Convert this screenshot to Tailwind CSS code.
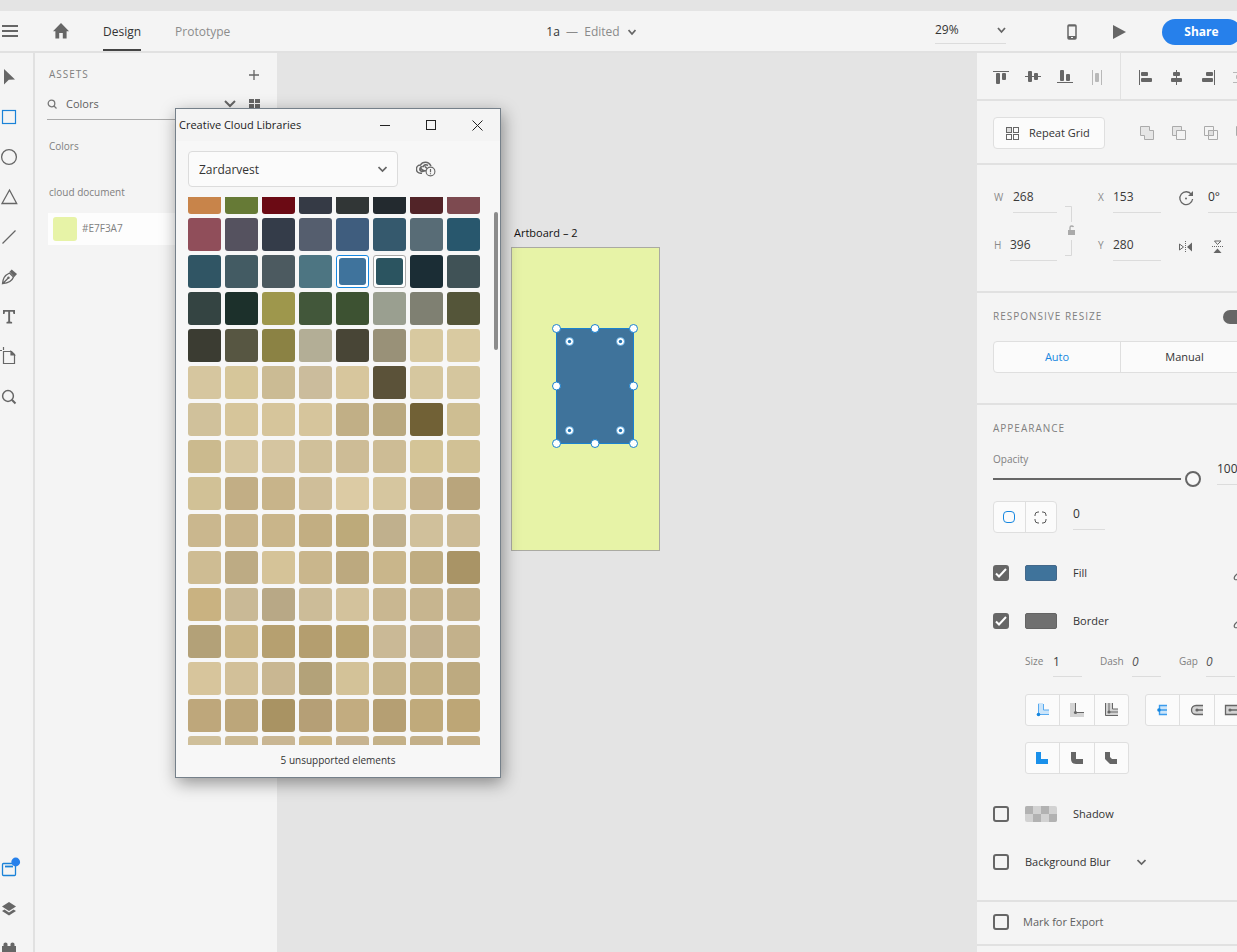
<!DOCTYPE html>
<html lang="en">
<head>
<meta charset="utf-8">
<meta name="viewport" content="width=device-width, initial-scale=1">
<title>1a</title>
<script src="https://cdn.jsdelivr.net/npm/@tailwindcss/browser@4"></script>
</head>
<body class="flex h-screen flex-col overflow-hidden bg-[#e4e4e4] font-['Open_Sans','Noto_Sans',sans-serif] text-xs text-[#333]">

<header class="mt-[11px] flex h-[42px] shrink-0 items-stretch border-b-2 border-[#e1e1e1] bg-[#f4f4f4]">
  <div class="flex w-[247px] shrink-0 items-stretch">
    <button class="w-[19px] shrink-0" aria-label="Menu">
      <svg class="ml-[2px]" width="16" height="14" fill="#666"><path d="M0 1h16v2H0zM0 6h16v2H0zM0 11h16v2H0z"/></svg>
    </button>
    <button class="ml-[34px] w-4 shrink-0" aria-label="Home">
      <svg width="16" height="16" fill="#666"><path d="M8 0l8 8.200h-2.400V15.500H9.800V10H6.200v5.500H2.400V8.200H0z"/></svg>
    </button>
    <nav class="ml-[34px] flex items-stretch gap-[34px] leading-4">
      <a href="#design" class="border-b-2 border-[#444] pt-[13px] text-[#333]">Design</a>
      <a href="#prototype" class="border-b-2 border-transparent pt-[13px] text-[#8c8c8c]">Prototype</a>
    </nav>
  </div>
  <button class="mx-auto flex items-center gap-2 pt-[2px] text-[#8a8a8a]">
    <span><span class="text-[#333]">1a</span>&nbsp; —&nbsp; Edited</span>
    <svg width="8" height="7" fill="none" stroke="#666" stroke-width="1.800"><path d="M.5 1l3.500 4 3.500-4"/></svg>
  </button>
  <div class="flex w-[302px] shrink-0 items-center pt-px">
    <button class="-mt-1 flex h-7 w-[71px] shrink-0 items-center justify-between border-b border-[#dcdcdc] pt-[2px]" aria-label="Zoom level">29%
      <svg width="9" height="7" fill="none" stroke="#666" stroke-width="1.800"><path d="M1 1l3.500 4 3.500-4"/></svg>
    </button>
    <button class="ml-[61px] shrink-0" aria-label="Device preview">
      <svg width="10" height="16"><rect x="1" y="1" width="8" height="14" rx="1" fill="none" stroke="#666" stroke-width="1.500"/><path d="M1 12h8v3H1zM1 1h8v1.500H1z" fill="#666"/><path d="M4 13h2v1H4z" fill="#f4f4f4"/></svg>
    </button>
    <button class="ml-9 shrink-0" aria-label="Play"><svg width="13" height="14" fill="#666"><path d="M0 0l13 7-13 7z"/></svg></button>
    <button class="ml-9 h-[26px] w-[79px] shrink-0 rounded-full bg-[#2680eb] font-bold text-white">Share</button>
  </div>
</header>

<div class="flex min-h-0 flex-1">
  <!-- tool bar -->
  <nav class="flex w-[35px] shrink-0 flex-col justify-between border-r-2 border-[#e1e1e1] bg-[#f4f4f4] pt-1" aria-label="Tools">
    <div class="flex w-[19px] flex-col [&>button]:flex [&>button]:h-10 [&>button]:items-center">
      <button aria-label="Select"><svg width="19" height="20" fill="#666"><path d="M4 2l11 10.500-6.200.3L4 17.500z"/></svg></button>
      <button aria-label="Rectangle"><svg width="19" height="20" fill="none" stroke="#1a82d8" stroke-width="1.200"><rect x="2.500" y="3.500" width="13" height="13"/></svg></button>
      <button aria-label="Ellipse"><svg width="19" height="20" fill="none" stroke="#666" stroke-width="1.300"><circle cx="9" cy="10" r="7.400"/></svg></button>
      <button aria-label="Polygon"><svg width="19" height="20" fill="none" stroke="#666" stroke-width="1.300"><path d="M9.500 3L16.700 16.500H2z"/></svg></button>
      <button aria-label="Line"><svg width="19" height="20" stroke="#666" stroke-width="1.300"><path d="M2.500 16.500l13-13"/></svg></button>
      <button aria-label="Pen"><svg width="19" height="20"><path d="M2.500 16.700C3 12 4 8.500 9.500 6l4 4C12 14.500 8 16 2.500 16.700zM2.500 16.700l6-6" fill="none" stroke="#666" stroke-width="1.300"/><circle cx="8.500" cy="10.800" r="1.200" fill="#666"/><path d="M9.500 4.800l2.200-2.300 5.300 4.500-2.700 3z" fill="#666"/></svg></button>
      <button aria-label="Text"><svg width="19" height="20" fill="#666"><path d="M3 3h12v4h-1.500l-.6-2.200h-2.800v9.700l2 .6V16.500H6.500v-1.400l1.700-.6V4.800H5L4.500 7H3z"/></svg></button>
      <button aria-label="Artboard"><svg width="19" height="20" fill="none" stroke="#666" stroke-width="1.200"><path d="M3.500 0v3M0 3.500h2M3.500 4.500v12h11v-9l-3-3z"/><path d="M11 4.500l3.500 3.500H11z" fill="#666"/></svg></button>
      <button aria-label="Zoom"><svg width="19" height="20" fill="none" stroke="#666" stroke-width="1.500"><circle cx="8" cy="9" r="5.400"/><path d="M11.800 12.800l3.700 3.700" stroke-width="2"/></svg></button>
    </div>
    <div class="-mb-[17px] flex w-[19px] flex-col [&>button]:flex [&>button]:h-10 [&>button]:items-center">
      <button aria-label="Assets"><svg class="overflow-visible" width="19" height="20"><rect x="2.500" y="4.500" width="13" height="12" rx="1" fill="none" stroke="#1a82d8" stroke-width="1.300"/><path d="M5 7.500h8" stroke="#1a82d8" stroke-width="1.800"/><circle cx="15.700" cy="3" r="4.400" fill="#2680eb"/></svg></button>
      <button aria-label="Layers"><svg width="19" height="20" fill="#666"><path d="M9 3l7 4.500L9 12 2 7.500z"/><path d="M4.500 10.500L2 12l7 4.500 7-4.500-2.500-1.500L9 13.500z"/></svg></button>
      <button aria-label="Plugins"><svg width="19" height="20" fill="#666"><path d="M2 7h1.500V5q0-1.500 2-1.500t2 1.500v2h3V5q0-1.500 2-1.500t2 1.500v2H16v12H2z"/></svg></button>
    </div>
  </nav>

  <!-- assets panel -->
  <aside class="w-[242px] shrink-0 bg-[#f4f4f4] pl-3 text-[10px] text-[#808080]">
    <div class="mr-[18px] ml-[2px] mt-3 flex h-5 items-center justify-between">
      <h2 class="tracking-[1px]">ASSETS</h2>
      <button aria-label="Add"><svg width="10" height="10" stroke="#666" stroke-width="1.300"><path d="M5 0v10M0 5h10"/></svg></button>
    </div>
    <div class="mr-4 mt-1 flex h-[31px] items-center border-b border-[#aaa]">
      <svg width="12" height="12" fill="none" stroke="#777" stroke-width="1.300"><circle cx="4.500" cy="5.500" r="3.300"/><path d="M7 8l2.500 2.500"/></svg>
      <input class="ml-[7px] min-w-0 flex-1 bg-transparent text-[11px] text-[#606060] outline-none" aria-label="Search assets" value="Colors">
      <button aria-label="Filter"><svg width="12" height="8" fill="none" stroke="#666" stroke-width="2"><path d="M1 1l5 5 5-5"/></svg></button>
      <button class="ml-[13px] mr-px" aria-label="Grid view"><svg width="11" height="10" fill="#666"><path d="M0 0h5v4H0zM6 0h5v4H6zM0 5h5v4H0zM6 5h5v4H6z"/></svg></button>
    </div>
    <h3 class="ml-[2px] mt-[18px] h-4 leading-4">Colors</h3>
    <h3 class="ml-[2px] mt-[30px] h-4 leading-4">cloud document</h3>
    <button class="ml-px mt-[13px] flex h-8 w-[calc(100%-1px)] items-center gap-[5px] bg-[#fdfdfd] pl-[5px]">
      <span class="size-6 rounded-[3px] bg-[#e7f3a7]"></span>#E7F3A7
    </button>
  </aside>

  <!-- canvas -->
  <main class="relative min-w-0 flex-1 bg-[#e4e4e4]">
    <div class="absolute left-[234px] top-[171px]">
      <p class="ml-[3px] h-[23px] text-[11px] leading-[18px] text-[#111]">Artboard – 2</p>
      <svg class="overflow-visible" width="149" height="304">
        <rect x=".5" y=".5" width="148" height="303" fill="#e7f3a7" stroke="#aaaaa2"/>
        <rect x="45.500" y="81.500" width="77" height="115" fill="#3f739b" stroke="#1a82d0"/>
        <g fill="#fff" stroke="#1a82d0">
          <circle cx="45.500" cy="81.500" r="4"/><circle cx="84" cy="81.500" r="4"/><circle cx="122.500" cy="81.500" r="4"/>
          <circle cx="45.500" cy="139" r="4"/><circle cx="122.500" cy="139" r="4"/>
          <circle cx="45.500" cy="196.500" r="4"/><circle cx="84" cy="196.500" r="4"/><circle cx="122.500" cy="196.500" r="4"/>
        </g>
        <g fill="#fff" stroke="#4ba0dc" stroke-width=".8">
          <circle cx="58.500" cy="94.500" r="4"/><circle cx="109.500" cy="94.500" r="4"/><circle cx="58.500" cy="183.500" r="4"/><circle cx="109.500" cy="183.500" r="4"/>
        </g>
        <g fill="#2676b4">
          <circle cx="58.500" cy="94.500" r="1.700"/><circle cx="109.500" cy="94.500" r="1.700"/><circle cx="58.500" cy="183.500" r="1.700"/><circle cx="109.500" cy="183.500" r="1.700"/>
        </g>
      </svg>
    </div>
  </main>

  <!-- property inspector -->
  <aside class="w-[260px] shrink-0 overflow-hidden bg-[#f4f4f4] [&_input]:outline-none">
    <section class="flex h-12 w-[288px] border-b-2 border-[#e1e1e1]">
      <div class="flex w-36 items-center gap-4 border-r border-[#e1e1e1] pl-4 pt-1">
        <button aria-label="Align top"><svg width="16" height="16" fill="#666"><path d="M0 1h16v1H0z"/><rect x="3" y="3" width="4" height="11" rx="1"/><rect x="9" y="3" width="4" height="7" rx="1"/></svg></button>
        <button aria-label="Align middle"><svg width="16" height="16" fill="#666"><path d="M0 6h16v1H0z"/><rect x="3" y="1" width="4" height="11" rx="1"/><rect x="9" y="3" width="4" height="7" rx="1"/></svg></button>
        <button aria-label="Align bottom"><svg width="16" height="16" fill="#666"><path d="M0 12h16v1H0z"/><rect x="3" y="0" width="4" height="11" rx="1"/><rect x="9" y="4" width="4" height="7" rx="1"/></svg></button>
        <button aria-label="Distribute horizontally"><svg width="16" height="16" fill="#b8b8b8"><path d="M3 0h1v15H3zM12 0h1v15h-1z"/><rect x="6" y="3" width="4" height="9" rx="1"/></svg></button>
      </div>
      <div class="flex items-center gap-4 pl-4 pt-1">
        <button aria-label="Align left"><svg width="16" height="16" fill="#666"><path d="M2 0h1v15H2z"/><rect x="4" y="2" width="7" height="4" rx="1"/><rect x="4" y="8" width="11" height="4" rx="1"/></svg></button>
        <button aria-label="Align centre"><svg width="16" height="16" fill="#666"><path d="M7 0h1v15H7z"/><rect x="4" y="2" width="7" height="4" rx="1"/><rect x="2" y="8" width="11" height="4" rx="1"/></svg></button>
        <button aria-label="Align right"><svg width="16" height="16" fill="#666"><path d="M13 0h1v15h-1z"/><rect x="5" y="2" width="7" height="4" rx="1"/><rect x="1" y="8" width="11" height="4" rx="1"/></svg></button>
        <button aria-label="Distribute vertically"><svg width="16" height="16" fill="#b8b8b8"><path d="M0 2h16v1H0zM0 12h16v1H0z"/><rect x="3" y="5" width="10" height="4" rx="1"/></svg></button>
      </div>
    </section>

    <section class="flex h-16 w-[288px] items-center border-b-2 border-[#e1e1e1] pl-4 pt-[2px]">
      <button class="flex h-8 w-28 items-center gap-[9px] rounded-[4px] border border-[#dfdfdf] bg-[#fbfbfb] pl-3 pt-px text-[11px]">
        <svg width="14" height="14" fill="none" stroke="#666"><rect x=".5" y=".5" width="5" height="5" fill="#ddd"/><rect x="7.500" y=".5" width="5" height="5"/><rect x=".5" y="7.500" width="5" height="5"/><rect x="7.500" y="7.500" width="5" height="5"/></svg>
        Repeat Grid
      </button>
      <div class="ml-[34px] flex gap-4">
        <button aria-label="Add"><svg width="16" height="16" fill="#e6e6e6" stroke="#aaa"><path d="M1.500 1.500h9v4h4v9h-9v-4h-4z"/></svg></button>
        <button aria-label="Subtract"><svg width="16" height="16" stroke="#aaa"><path d="M1.500 1.500h9v9h-9z" fill="#e6e6e6"/><path d="M5.500 5.500h9v9h-9z" fill="#f4f4f4"/></svg></button>
        <button aria-label="Intersect"><svg width="16" height="16" fill="none" stroke="#aaa"><path d="M1.500 1.500h9v9h-9zM5.500 5.500h9v9h-9z"/><path d="M5.500 5.500h5v5h-5z" fill="#e0e0e0"/></svg></button>
        <button aria-label="Exclude overlap"><svg width="16" height="16" fill="#ddd" fill-rule="evenodd" stroke="#aaa"><path d="M1.500 1.500h9v9h-9zM5.500 5.500h9v9h-9z"/></svg></button>
      </div>
    </section>

    <section class="flex h-32 w-[288px] border-b-2 border-[#e1e1e1] pl-4 pt-[18px]">
      <div class="flex w-16 flex-col gap-[18px] text-[10px] text-[#8a8a8a]">
        <label class="flex items-center gap-[9px]"><span class="w-[11px] pl-px">W</span><input class="h-[30px] min-w-0 flex-1 border-b border-[#dcdcdc] pb-[3px] text-xs text-[#3a3a3a]" value="268"></label>
        <label class="flex items-center gap-[7px]"><span class="w-[10px] pl-px">H</span><input class="h-[30px] min-w-0 flex-1 border-b border-[#dcdcdc] pb-[3px] text-xs text-[#3a3a3a]" value="396"></label>
      </div>
      <button class="ml-2 mt-[23px] h-[50px]" aria-label="Lock aspect">
        <svg width="12" height="50" fill="none" stroke="#d8d8d8"><path d="M0 .5h6.500V16M6.500 34v15.500H0"/><rect x="3" y="24" width="7" height="5" fill="#aaa" stroke="none"/><path d="M5 24v-2.500q0-1.500 1.500-1.500T8.500 21" stroke="#aaa" stroke-width="1.300"/></svg>
      </button>
      <div class="ml-[21px] flex w-[63px] flex-col gap-[18px] text-[10px] text-[#8a8a8a]">
        <label class="flex items-center gap-[5px]"><span class="w-[10px]">X</span><input class="h-[30px] min-w-0 flex-1 border-b border-[#dcdcdc] pb-[3px] text-xs text-[#3a3a3a]" value="153"></label>
        <label class="flex items-center gap-[5px]"><span class="w-[10px]">Y</span><input class="h-[30px] min-w-0 flex-1 border-b border-[#dcdcdc] pb-[3px] text-xs text-[#3a3a3a]" value="280"></label>
      </div>
      <div class="ml-[17px] flex flex-col gap-[18px]">
        <label class="flex h-[30px] items-center gap-[13px]">
          <svg width="17" height="17" fill="none" stroke="#666" stroke-width="1.300"><path d="M13.500 4.500A6.400 6.400 0 1 0 14.600 9"/><path d="M15 1v5h-5z" fill="#666" stroke="none"/><circle cx="8" cy="8.500" r="1" fill="#666" stroke="none"/></svg>
          <input class="h-[30px] w-12 border-b border-[#dcdcdc] pb-[3px]" aria-label="Rotation" value="0°">
        </label>
        <div class="flex h-[30px] items-center gap-[18px] pt-px">
          <button aria-label="Flip horizontally"><svg width="15" height="14"><path d="M1.500 4l4 3-4 3z" fill="none" stroke="#666"/><path d="M14 2.500v9L9 7z" fill="#666"/><path d="M7.500 1v12" stroke="#666" stroke-dasharray="1 1"/></svg></button>
          <button aria-label="Flip vertically"><svg width="13" height="15"><path d="M3.500 2l3 3.500L10 2z" fill="none" stroke="#666"/><path d="M2.500 14h8l-4-4.500z" fill="#666"/><path d="M1 7.500h12" stroke="#666" stroke-dasharray="1 1"/></svg></button>
        </div>
      </div>
    </section>

    <section class="h-28 w-[288px] border-b-2 border-[#e1e1e1] pl-4 pt-4">
      <div class="flex h-4 items-center justify-between">
        <h2 class="text-[10px] tracking-[1px] text-[#808080]">RESPONSIVE RESIZE</h2>
        <button role="switch" aria-checked="true" aria-label="Responsive resize" class="mr-4 flex h-[14px] w-[26px] justify-end rounded-full bg-[#666] p-[2px]"><span class="size-[10px] rounded-full bg-white"></span></button>
      </div>
      <div class="mt-4 flex h-8 w-64 rounded-[4px] border border-[#dfdfdf] bg-[#fbfbfb] text-[11px]">
        <button class="w-[127px] border-r border-[#dfdfdf] pt-px text-[#1687e0]">Auto</button>
        <button class="flex-1 pt-px">Manual</button>
      </div>
    </section>

    <section class="w-[288px] border-b-2 border-[#e1e1e1] pb-[30px] pl-4 pt-[15px]">
      <h2 class="h-4 text-[10px] leading-4 tracking-[1px] text-[#808080]">APPEARANCE</h2>
      <div class="mt-[15px] flex h-9">
        <label class="flex w-[208px] flex-col gap-1 text-[10px] leading-4 text-[#808080]">Opacity
          <input type="range" min="0" max="100" value="100" class="h-4 w-full appearance-none bg-transparent [&::-webkit-slider-runnable-track]:h-[2px] [&::-webkit-slider-runnable-track]:bg-[#666] [&::-webkit-slider-thumb]:-mt-[7px] [&::-webkit-slider-thumb]:size-4 [&::-webkit-slider-thumb]:appearance-none [&::-webkit-slider-thumb]:rounded-full [&::-webkit-slider-thumb]:border-2 [&::-webkit-slider-thumb]:border-[#666] [&::-webkit-slider-thumb]:bg-[#f8f8f8] [&::-webkit-slider-thumb]:shadow-[0_0_0_4px_#f4f4f4]">
        </label>
        <input class="ml-4 mt-1 h-[30px] w-10 border-b border-[#dcdcdc] pb-[2px]" aria-label="Opacity value" value="100%">
      </div>
      <div class="mt-[14px] flex h-8 gap-4">
        <div class="flex w-16 rounded-[4px] border border-[#dfdfdf] bg-[#fbfbfb]">
          <button class="grid flex-1 place-items-center border-r border-[#dfdfdf]" aria-label="Same radius for all corners"><svg width="12" height="12" fill="none" stroke="#1687e0"><rect x=".5" y=".5" width="11" height="11" rx="3.500"/></svg></button>
          <button class="grid flex-1 place-items-center" aria-label="Different radius for each corner"><svg width="13" height="13" fill="none" stroke="#555"><path d="M1 5V4q0-3 3-3h1M8 1h1q3 0 3 3v1M12 8v1q0 3-3 3H8M5 12H4q-3 0-3-3V8"/></svg></button>
        </div>
        <input class="-mt-px h-[30px] w-8 border-b border-[#dcdcdc] pb-[2px]" aria-label="Corner radius" value="0">
      </div>

      <div class="mt-8 flex h-4 items-center">
        <span class="grid size-4"><input id="fill" type="checkbox" checked class="peer size-4 appearance-none rounded-[3px] border-2 border-[#666] checked:bg-[#666] [grid-area:1/1]"><svg class="pointer-events-none hidden peer-checked:block [grid-area:1/1]" width="16" height="16" fill="none" stroke="#fff" stroke-width="2"><path d="M3 8.500l3 3 7-7.500"/></svg></span>
        <button class="ml-4 h-4 w-8 rounded-[2px] border border-[#44688a] bg-[#3f739b]" aria-label="Fill colour"></button>
        <label for="fill" class="ml-4 w-[160px] pt-px text-[11px]">Fill</label>
        <button aria-label="Pick fill colour"><svg width="16" height="16" fill="none" stroke="#666" stroke-width="1.200"><path d="M2 14.500c-1.500-1-.5-3 .5-4l6-6 3 3-6 6c-1 1-2.500 1.500-3.500 1zM7 3.500l5.500 5.500M10 5l3-3"/></svg></button>
      </div>
      <div class="mt-8 flex h-4 items-center">
        <span class="grid size-4"><input id="border" type="checkbox" checked class="peer size-4 appearance-none rounded-[3px] border-2 border-[#666] checked:bg-[#666] [grid-area:1/1]"><svg class="pointer-events-none hidden peer-checked:block [grid-area:1/1]" width="16" height="16" fill="none" stroke="#fff" stroke-width="2"><path d="M3 8.500l3 3 7-7.500"/></svg></span>
        <button class="ml-4 h-4 w-8 rounded-[2px] border border-[#646464] bg-[#707070]" aria-label="Border colour"></button>
        <label for="border" class="ml-4 w-[160px] pt-px text-[11px]">Border</label>
        <button aria-label="Pick border colour"><svg width="16" height="16" fill="none" stroke="#666" stroke-width="1.200"><path d="M2 14.500c-1.500-1-.5-3 .5-4l6-6 3 3-6 6c-1 1-2.500 1.500-3.500 1zM7 3.500l5.500 5.500M10 5l3-3"/></svg></button>
      </div>

      <div class="ml-8 mt-[18px] flex text-[10px] text-[#808080]">
        <label class="flex items-center"><span class="w-7">Size</span><input class="h-[30px] w-[29px] border-b border-[#dcdcdc] pb-px text-xs text-[#3a3a3a]" value="1"></label>
        <label class="ml-[18px] flex items-center"><span class="w-8">Dash</span><input class="h-[30px] w-[29px] border-b border-[#dcdcdc] text-xs italic text-[#555]" value="0"></label>
        <label class="ml-[18px] flex items-center"><span class="w-[27px]">Gap</span><input class="h-[30px] w-[29px] border-b border-[#dcdcdc] text-xs italic text-[#555]" value="0"></label>
      </div>

      <div class="ml-8 mt-[17px] flex gap-4">
        <div class="flex h-8 w-[104px] divide-x divide-[#dfdfdf] rounded-[3px] border border-[#dfdfdf] bg-[#fbfbfb] [&>button]:grid [&>button]:flex-1 [&>button]:place-items-center">
          <button aria-label="Inner stroke"><svg width="14" height="14"><path d="M2 0h5v7h6v5H2z" fill="#cbe5fa"/><path d="M2.500 1v10.500H13M7.500 1v6H13" fill="none" stroke="#58aaf0"/><circle cx="2.500" cy="11.500" r="1.800" fill="#1687e0"/></svg></button>
          <button aria-label="Outer stroke"><svg width="16" height="16"><path d="M1 1h5v9h9v5H1z" fill="#d4d4d4"/><path d="M6.500 1v9.500H15" fill="none" stroke="#666"/><circle cx="6.500" cy="10.500" r="1.600" fill="#666"/></svg></button>
          <button aria-label="Centre stroke"><svg width="16" height="16"><path d="M2 1h7v6h6v7H2z" fill="#d4d4d4"/><path d="M2.500 1v12.500H15M9.500 1v6H15M6 1v9h9" fill="none" stroke="#666"/><circle cx="6" cy="10" r="1.600" fill="#666"/></svg></button>
        </div>
        <div class="flex h-8 w-[104px] shrink-0 divide-x divide-[#dfdfdf] rounded-[3px] border border-[#dfdfdf] bg-[#fbfbfb] [&>button]:grid [&>button]:flex-1 [&>button]:place-items-center">
          <button aria-label="Butt cap"><svg width="14" height="14"><path d="M3 2h8v10H3z" fill="#cbe5fa"/><path d="M11 2.500H3.500v9H11M2 7h9" fill="none" stroke="#3c9cec" stroke-width="1.400"/><circle cx="3" cy="7" r="1.800" fill="#1687e0"/></svg></button>
          <button aria-label="Round cap"><svg width="14" height="14"><path d="M13 2H6a5 5 0 0 0 0 10h7z" fill="#d4d4d4"/><path d="M13 2.500H6a4.500 4.500 0 0 0 0 9h7M6 7h7" fill="none" stroke="#666" stroke-width="1.300"/><circle cx="7" cy="7" r="1.600" fill="#666"/></svg></button>
          <button aria-label="Projecting cap"><svg width="14" height="14"><path d="M1 2h12v10H1z" fill="#d4d4d4"/><path d="M13 2.500H1.500v9H13M6 7h7" fill="none" stroke="#666" stroke-width="1.300"/><circle cx="6" cy="7" r="1.600" fill="#666"/></svg></button>
        </div>
      </div>
      <div class="ml-8 mt-4 flex h-8 w-[104px] divide-x divide-[#dfdfdf] rounded-[3px] border border-[#dfdfdf] bg-[#fbfbfb] [&>button]:grid [&>button]:flex-1 [&>button]:place-items-center">
        <button aria-label="Miter join"><svg width="13" height="12" fill="#1a90ea"><path d="M0 0h5v7h7v5H0z"/></svg></button>
        <button aria-label="Round join"><svg width="12" height="12" fill="#666"><path d="M0 0h5v7h7v5H5q-5 0-5-5z"/></svg></button>
        <button aria-label="Bevel join"><svg width="12" height="12" fill="#666"><path d="M0 0h5v5l2 2h5v5H5L0 7z"/></svg></button>
      </div>

      <div class="mt-8 flex h-4 items-center">
        <input id="shadow" type="checkbox" class="size-4 appearance-none rounded-[3px] border-2 border-[#666] checked:bg-[#666]">
        <button class="ml-4 overflow-hidden rounded-[2px]" aria-label="Shadow colour"><svg width="32" height="16"><path d="M0 0h32v16H0z" fill="#d2d2d2"/><path d="M0 0h8v8H0zM16 0h8v8h-8zM8 8h8v8H8zM24 8h8v8h-8z" fill="#b2b2b2"/></svg></button>
        <label for="shadow" class="ml-4 pt-px text-[11px]">Shadow</label>
      </div>
      <div class="mt-8 flex h-4 items-center gap-4">
        <input id="blur" type="checkbox" class="size-4 appearance-none rounded-[3px] border-2 border-[#666] checked:bg-[#666]">
        <label for="blur" class="w-24 pt-px text-[11px]">Background Blur</label>
        <button aria-label="Blur type"><svg width="9" height="7" fill="none" stroke="#666" stroke-width="1.700"><path d="M.5 1l4 4 4-4"/></svg></button>
      </div>
    </section>

    <section class="flex h-11 w-[288px] items-center gap-[14px] border-b-2 border-[#e1e1e1] pb-[2px] pl-4 text-[11px] text-[#606060]">
      <input id="export" type="checkbox" class="size-4 appearance-none rounded-[3px] border-2 border-[#666] checked:bg-[#666]">
      <label for="export">Mark for Export</label>
    </section>
  </aside>
</div>

<!-- floating library window -->
<section role="dialog" aria-labelledby="libtitle" class="absolute left-[175px] top-[108px] w-[326px] border border-[#75808a] bg-[#f7f7f7] shadow-[2px_5px_16px_rgba(0,0,0,0.4)]">
  <header class="flex h-8 items-center bg-[#f4f4f4] pl-[3px]">
    <h2 id="libtitle" class="flex-1 pt-px text-[11px] text-[#222]">Creative Cloud Libraries</h2>
    <div class="mr-[17px] flex items-center gap-9">
      <button aria-label="Minimize"><svg width="10" height="10" stroke="#222"><path d="M0 5.500h10"/></svg></button>
      <button aria-label="Maximize"><svg width="10" height="10" fill="none" stroke="#222"><rect x=".5" y=".5" width="9" height="9"/></svg></button>
      <button aria-label="Close"><svg width="11" height="11" stroke="#222"><path d="M.5.5l10 10M10.500.5l-10 10"/></svg></button>
    </div>
  </header>
  <div class="mt-[10px] flex items-center pl-3">
    <div class="grid w-[210px] items-center">
      <select class="h-9 appearance-none rounded-[4px] border border-[#dcdcdc] bg-[#fbfbfb] px-[10px] pt-px [grid-area:1/1]" aria-label="Library"><option>Zardarvest</option></select>
      <svg class="pointer-events-none mr-[11px] justify-self-end [grid-area:1/1]" width="9" height="7" fill="none" stroke="#666" stroke-width="1.700"><path d="M.5 1l4 4 4-4"/></svg>
    </div>
    <button class="ml-[18px]" aria-label="Sync status">
      <svg width="20" height="16" fill="none" stroke="#666" stroke-width="1.500"><path d="M6 12.200H4.500A4 4 0 0 1 4.500 4Q6 1.200 9.500 1.200T15 5"/><path d="M10 9.500Q8 10.500 6 8.500L4.500 7M8.500 9A2.400 2.400 0 1 1 6.500 5.600M7 6Q9 2.500 12 4.500M9 5.500l2 2" stroke-width="1.600"/><circle cx="14.500" cy="10.500" r="4.400" fill="#f7f7f7" stroke-width="1.100"/><path d="M14.500 8v3.200M14.500 12.200v1" stroke-width="1.200"/></svg>
    </button>
  </div>
  <div class="mt-[10px] flex h-[548px] justify-between">
    <div class="ml-3 w-[292px] overflow-hidden">
      <div id="swatches" class="-mt-4 grid grid-cols-8 gap-1"></div>
    </div>
    <div class="mr-[2px] mt-[15px] h-[138px] w-1 rounded-full bg-[#8c8c8c]"></div>
  </div>
  <p class="h-8 pt-[7px] text-center text-[10px] leading-4">5 unsupported elements</p>
</section>

<script>
const colors = `C8844A 667A36 6B0A14 353A45 313636 232A2F 522428 7D4A50
904E5A 55525F 343C49 555E6E 3F5D7E 35596D 586C76 28576D
305564 435B63 4C5A60 4D7582 3F739C 2B5460 1B2D35 405256
344442 1C302B 9E974C 42573A 3D5232 9A9F90 7F8072 545539
3B3C32 575642 8B8244 B3AE96 484536 999178 D8C9A0 D9CAA1
D6C69F D6C69A CBBB94 CBBC9C D7C69D 5B5239 D6C79F D5C69E
D0C19B D6C59A D6C59B D6C59C C1AF86 B9A87F 716136 CEBE92
CBBA8E D6C6A0 D5C5A0 D0C09A CDBC96 CDBC95 D4C497 D1C195
D1C196 C2AE85 C8B48A CFBE99 DCCBA4 D6C69F C6B38C B9A57C
CAB78E C8B48B C9B58A C2AE82 BDAA7A C0B08D D0C09B CCBB96
CEBC93 BDAB84 D5C398 C9B68C BCA97F C9B68B BFAC81 A99466
C9B281 C9B996 B8A886 CCBC98 D3C29C C9B791 C7B58F C3B18B
B3A178 CAB689 B6A070 B49E6F B8A371 CAB996 C2B18F C3B18B
D7C59C D2C099 C9B792 B3A279 D3C298 C6B48B C4B186 BDAA80
BEA77B BCA67A A99363 B59F76 C2AC80 B59F73 C0AA7B BDA676
CFBF9A CBB993 C9B693 CCB688 C7B390 C4B188 C3AF88 C4AE84`.split(/\s+/);
const SELECTED = 20, HOVERED = 21;
const box = document.getElementById('swatches');
colors.forEach((c, i) => {
  const b = document.createElement('button');
  b.className = i === SELECTED ? 'h-[33px] rounded-[3px] border border-[#1687e0] bg-white p-[2px]'
    : i === HOVERED ? 'h-[33px] rounded-[3px] border border-[#a8a8a8] bg-white p-[2px]'
    : 'h-[33px] rounded-[3px]';
  b.setAttribute('aria-label', '#' + c);
  if (i === SELECTED || i === HOVERED) {
    const s = document.createElement('span');
    s.className = 'block h-full w-full rounded-[3px]';
    s.style.backgroundColor = '#' + c;
    b.append(s);
  } else b.style.backgroundColor = '#' + c;
  box.append(b);
});
</script>
</body>
</html>
